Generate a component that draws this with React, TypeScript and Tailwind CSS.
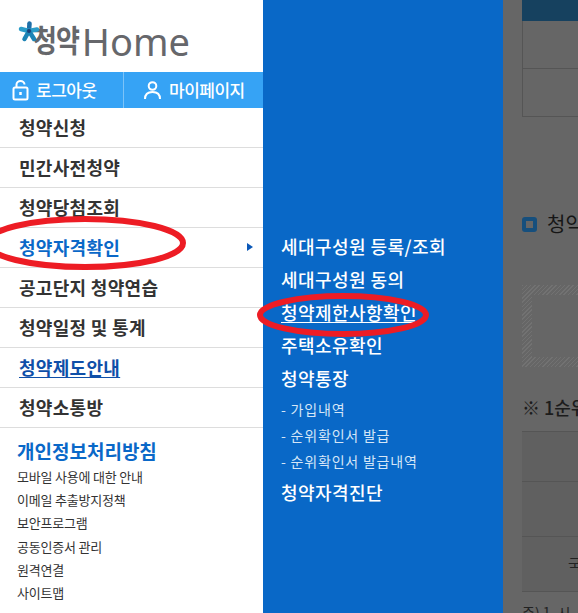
const font = { fontFamily: '"Noto Sans CJK KR", "Liberation Sans", sans-serif' };

const rows = [
  { t: "청약신청" },
  { t: "민간사전청약" },
  { t: "청약당첨조회" },
  { t: "청약자격확인", active: true },
  { t: "공고단지 청약연습" },
  { t: "청약일정 및 통계" },
  { t: "청약제도안내", link: true },
  { t: "청약소통방" },
];
const small = ["모바일 사용에 대한 안내", "이메일 추출방지정책", "보안프로그램", "공동인증서 관리", "원격연결", "사이트맵"];

function Star() {
  return (
    <svg width="22" height="22" viewBox="0 0 22 22" className="absolute left-[18px] top-[21px]">
      <g strokeWidth="4.5" strokeLinecap="round">
        <line x1="11" y1="10" x2="11.5" y2="2.5" stroke="#1f6fa8" />
        <line x1="11" y1="10" x2="3" y2="8" stroke="#2a9cc8" />
        <line x1="11" y1="10" x2="19" y2="8.5" stroke="#2a9cc8" />
        <line x1="11" y1="10" x2="6.5" y2="18" stroke="#1d84b5" />
        <line x1="11" y1="10" x2="16" y2="18" stroke="#1d84b5" />
      </g>
      <circle cx="11" cy="10" r="2" fill="#1a3f78" />
    </svg>
  );
}

export default function App() {
  return (
    <div className="relative flex h-[613px] w-[578px] overflow-hidden" style={font}>
      <aside className="h-full w-[263px] shrink-0 bg-white">
        <div className="relative h-[72px]">
          <div className="flex h-full items-start pl-[33px] pt-[19px] text-[#66676b]">
            <span className="inline-block origin-center scale-y-[1.2] text-[26px] font-bold leading-[40px] tracking-[-1px]">청약</span>
            <span className="ml-[3px] text-[38px] leading-[44px]" style={{ fontFamily: '"Noto Sans", sans-serif' }}>Home</span>
          </div>
          <Star />
        </div>
        <div className="flex h-9 bg-[#36a3f5] text-[17px] font-medium tracking-[-0.5px] text-white">
          <div className="flex w-[124px] items-center gap-[7px] border-r border-[#7cc3f8] pl-[12px]">
            <svg width="17" height="21" viewBox="0 0 17 21" fill="none" stroke="white" strokeWidth="2">
              <rect x="1.5" y="7.5" width="14" height="12" rx="1.5" />
              <path d="M4.5 7.5V4.5a4 3.5 0 0 1 8 0" />
              <path d="M8.5 12v3" strokeWidth="2.5" />
            </svg>
            <span>로그아웃</span>
          </div>
          <div className="flex flex-1 items-center gap-[8px] pl-[20px]">
            <svg width="17" height="19" viewBox="0 0 17 19" fill="none" stroke="white" strokeWidth="2">
              <circle cx="8.5" cy="5" r="3.8" />
              <path d="M1 18c0-4.5 3-7 7.5-7s7.5 2.5 7.5 7" />
            </svg>
            <span>마이페이지</span>
          </div>
        </div>
        <nav>
          {rows.map((r) => (
            <div key={r.t} className="flex h-10 items-center justify-between border-b border-[#dddddd] pb-[2px] pl-[19px] pr-[10px] text-[18px] font-bold leading-[26px] tracking-[0.3px] text-[#333333]">
              <span className={r.active ? "text-[#0a68c8]" : r.link ? "text-[#0f4fa8] underline underline-offset-2" : ""}>{r.t}</span>
              {r.active && <span className="h-0 w-0 border-y-[4px] border-l-[6px] border-y-transparent border-l-[#0a58b8]" />}
            </div>
          ))}
        </nav>
        <div className="pl-[17px] pt-[9px]">
          <div className="text-[19px] font-bold leading-[27px] text-[#0a68c8]">개인정보처리방침</div>
          <ul className="mt-[1px] text-[13px] leading-[23.2px] tracking-[-0.2px] text-[#333333]">
            {small.map((s) => <li key={s}>{s}</li>)}
          </ul>
        </div>
      </aside>

      <section className="h-full w-[240px] shrink-0 bg-[#0968c7] pl-[18px] pt-[230px] text-white">
        <ul className="text-[18px] font-medium leading-[33px] tracking-[0.45px]">
          <li>세대구성원 등록/조회</li>
          <li>세대구성원 동의</li>
          <li className="underline underline-offset-2">청약제한사항확인</li>
          <li>주택소유확인</li>
          <li>청약통장</li>
        </ul>
        <ul className="mt-[1px] text-[14px] leading-[26px] tracking-[0.8px] text-[#d5e6f7]">
          <li>- 가입내역</li>
          <li>- 순위확인서 발급</li>
          <li>- 순위확인서 발급내역</li>
        </ul>
        <div className="mt-[2px] text-[18px] font-medium leading-[33px] tracking-[0.45px]">청약자격진단</div>
      </section>

      <section className="h-full flex-1 overflow-hidden bg-[#666666] pl-[19px] text-[#161616]">
        <div className="w-[100px]">
          <div className="h-[21px] bg-[#16415f]" />
          <div className="h-[48px] border-x border-b border-[#555555]" />
          <div className="h-[48px] border-x border-b border-[#555555]" />
        </div>
        <div className="mt-[95px] flex items-center gap-[10px]">
          <span className="flex h-[15px] w-[15px] shrink-0 items-center justify-center rounded-[3px] bg-[#164f7d]">
            <span className="h-[7px] w-[7px] bg-[#666666]" />
          </span>
          <span className="whitespace-nowrap text-[20px] leading-[24px]">청약</span>
        </div>
        <div className="mt-[49px] h-[82px] w-[100px] bg-[repeating-linear-gradient(135deg,#727272_0,#727272_1px,#666666_1px,#666666_3px)] p-[10px]">
          <div className="h-full w-full bg-[#666666]" />
        </div>
        <div className="mt-[29px] whitespace-nowrap text-[18px] font-medium leading-[22px] text-[#1c1c1c]">※ 1순위</div>
        <div className="mt-[13px] w-[100px] border-t border-[#555555] bg-[#606060]">
          <div className="h-[50px] border-b border-[#555555]" />
          <div className="h-[55px] border-b border-[#555555]" />
          <div className="flex h-[55px] items-end border-b border-[#555555] pb-[16px] pl-[46px] text-[15px] leading-[22px] text-[#222222]">국</div>
        </div>
        <div className="mt-[10px] whitespace-nowrap text-[14px] leading-[20px] text-[#222222]">주) 1. 시</div>
      </section>

      <svg className="pointer-events-none absolute left-0 top-0" width="578" height="613" fill="none" stroke="#ed1c24" strokeWidth="6">
        <ellipse cx="85" cy="243" rx="98" ry="24" />
        <ellipse cx="343" cy="315" rx="83" ry="19" />
      </svg>
    </div>
  );
}
